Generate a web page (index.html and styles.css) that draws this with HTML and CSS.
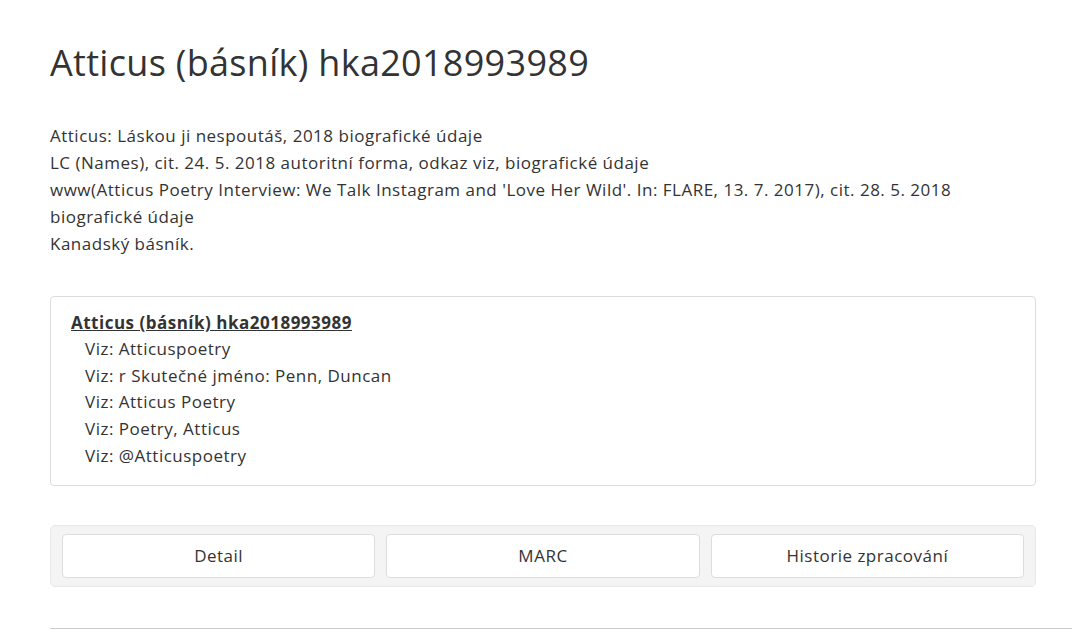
FILE: index.html
```html
<!DOCTYPE html>
<html lang="cs">
<head>
    <meta charset="UTF-8">
    <meta name="viewport" content="width=device-width, initial-scale=1.0">
    <title>Atticus (básník) hka2018993989</title>
    <link rel="stylesheet" href="styles.css">
</head>
<body>
    <main class="record">
        <h1>Atticus (básník) hka2018993989</h1>

        <div class="sources">
            <p>Atticus: Láskou ji nespoutáš, 2018 biografické údaje</p>
            <p>LC (Names), cit. 24. 5. 2018 autoritní forma, odkaz viz, biografické údaje</p>
            <p>www(Atticus Poetry Interview: We Talk Instagram and 'Love Her Wild'. In: FLARE, 13. 7. 2017), cit. 28. 5. 2018 biografické údaje</p>
            <p>Kanadský básník.</p>
        </div>

        <div class="refs">
            <a class="refs-title" href="#">Atticus (básník) hka2018993989</a>
            <ul>
                <li>Viz: Atticuspoetry</li>
                <li>Viz: r Skutečné jméno: Penn, Duncan</li>
                <li>Viz: Atticus Poetry</li>
                <li>Viz: Poetry, Atticus</li>
                <li>Viz: @Atticuspoetry</li>
            </ul>
        </div>

        <div class="tabs">
            <button class="tab">Detail</button>
            <button class="tab">MARC</button>
            <button class="tab">Historie zpracování</button>
        </div>

        <hr>
    </main>
</body>
</html>
```

FILE: styles.css
```css
body {
    font-family: 'Open Sans', 'Noto Sans', sans-serif;
    margin: 0;
    padding: 0;
    background-color: #fff;
    color: #333;
    font-size: 17px;
    line-height: 27px;
    letter-spacing: 0.5px;
}
.record {
    padding: 30px 0 0 50px;
}
h1 {
    font-size: 36px;
    font-weight: 400;
    line-height: 1.2;
    margin: 11px 0 38px;
    letter-spacing: 0.3px;
}
.sources {
    width: 950px;
}
.sources p {
    margin: 0;
}
.refs {
    width: 944px;
    margin-top: 39px;
    padding: 12px 20px 16px;
    border: 1px solid #ddd;
    border-radius: 4px;
}
.refs-title {
    color: #333;
    font-weight: 700;
    text-decoration: underline;
}
.refs ul {
    list-style: none;
    margin: 0;
    padding: 0 0 0 14px;
    line-height: 26.6px;
}
.tabs {
    display: flex;
    gap: 11px;
    width: 962px;
    margin-top: 39px;
    padding: 8px 11px;
    background-color: #f4f4f4;
    border: 1px solid #e8e8e8;
    border-radius: 5px;
}
.tab {
    flex: 1;
    height: 44px;
    padding-bottom: 3px;
    font-family: inherit;
    font-size: 17px;
    letter-spacing: 0.5px;
    color: #333;
    background-color: #fff;
    border: 1px solid #ddd;
    border-radius: 4px;
    cursor: pointer;
}
hr {
    margin: 41px 0 0;
    border: none;
    border-top: 1px solid #ccc;
}
```
